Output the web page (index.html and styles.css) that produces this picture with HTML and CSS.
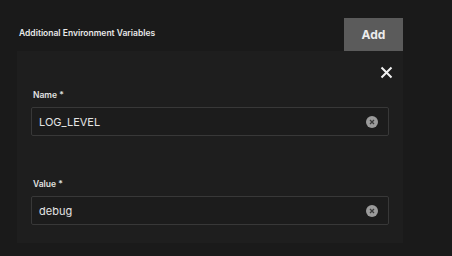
FILE: index.html
```html
<!DOCTYPE html>
<html lang="en">
<head>
    <meta charset="UTF-8">
    <meta name="viewport" content="width=device-width, initial-scale=1.0">
    <title>Environment Variables</title>
    <link rel="stylesheet" href="styles.css">
</head>
<body>
    <div class="env-section">
        <div class="env-header">
            <span class="env-title">Additional Environment Variables</span>
            <button class="add-btn">Add</button>
        </div>

        <div class="env-card">
            <div class="close-row">
                <svg class="close-icon" width="13" height="13" viewBox="0 0 13 13">
                    <path d="M1.5 1.5 L11.5 11.5 M11.5 1.5 L1.5 11.5" stroke="#f2f2f2" stroke-width="2" fill="none"/>
                </svg>
            </div>

            <div class="field">
                <label class="field-label">Name *</label>
                <div class="field-input">
                    <span class="field-value">LOG_LEVEL</span>
                    <span class="clear-icon">
                        <svg width="12" height="12" viewBox="0 0 12 12">
                            <circle cx="6" cy="6" r="6" fill="#9b9b9b"/>
                            <path d="M4 4 L8 8 M8 4 L4 8" stroke="#3a3a3a" stroke-width="1.3"/>
                        </svg>
                    </span>
                </div>
            </div>

            <div class="field field-second">
                <label class="field-label">Value *</label>
                <div class="field-input">
                    <span class="field-value">debug</span>
                    <span class="clear-icon">
                        <svg width="12" height="12" viewBox="0 0 12 12">
                            <circle cx="6" cy="6" r="6" fill="#9b9b9b"/>
                            <path d="M4 4 L8 8 M8 4 L4 8" stroke="#3a3a3a" stroke-width="1.3"/>
                        </svg>
                    </span>
                </div>
            </div>
        </div>
    </div>
</body>
</html>
```

FILE: styles.css
```css
body {
    margin: 0;
    background-color: #1a1a1a;
    font-family: Inter, "Noto Sans", sans-serif;
    color: #e6e6e6;
}
.env-section {
    width: 386px;
    margin-left: 17px;
}
.env-header {
    display: flex;
    align-items: center;
    justify-content: space-between;
    padding-top: 18px;
    height: 33px;
}
.env-title {
    font-size: 8.5px;
    font-weight: 600;
    padding-left: 2px;
    margin-top: -3px;
    color: #e8e8e8;
}
.add-btn {
    width: 59px;
    height: 33px;
    border: 0;
    background-color: #5b5b5b;
    color: #ececec;
    font-family: Inter, "Noto Sans", sans-serif;
    font-size: 12px;
    font-weight: 700;
    padding: 0;
}
.env-card {
    background-color: #1e1e1e;
    padding: 16px 14px 18px 14px;
}
.close-row {
    display: flex;
    justify-content: flex-end;
    height: 12px;
    margin-right: -4px;
}
.close-icon {
    margin-top: -1px;
}
.field {
    margin-top: 11px;
}
.field-second {
    margin-top: 43px;
}
.field-label {
    display: block;
    height: 10px;
    line-height: 10px;
    font-size: 8.5px;
    font-weight: 600;
    padding-left: 2px;
    margin-bottom: 7px;
    color: #e2e2e2;
}
.field-input {
    display: flex;
    align-items: center;
    justify-content: space-between;
    height: 27px;
    border: 1px solid #383838;
    border-radius: 2px;
    background-color: #1c1c1c;
    padding: 0 10px 0 7px;
}
.field-value {
    font-size: 11px;
    color: #e4e4e4;
}
.clear-icon {
    display: flex;
}
```
